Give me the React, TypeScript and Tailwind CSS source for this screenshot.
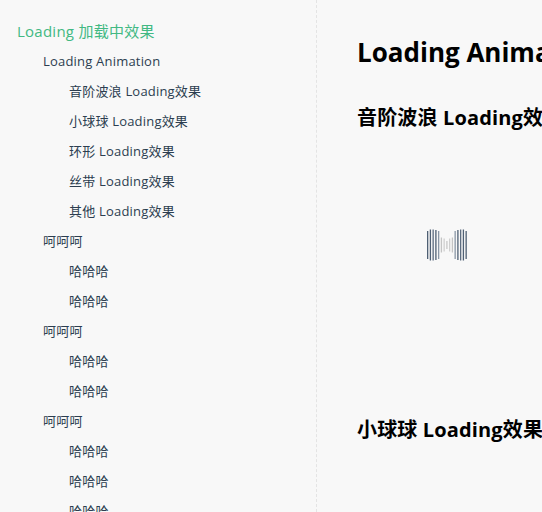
import React from "react";

const font = { fontFamily: '"Open Sans", "Noto Sans CJK SC", sans-serif' };

type Item = { text: string; level: 0 | 1 | 2; active?: boolean };

const items: Item[] = [
  { text: "Loading 加载中效果", level: 0, active: true },
  { text: "Loading Animation", level: 1 },
  { text: "音阶波浪 Loading效果", level: 2 },
  { text: "小球球 Loading效果", level: 2 },
  { text: "环形 Loading效果", level: 2 },
  { text: "丝带 Loading效果", level: 2 },
  { text: "其他 Loading效果", level: 2 },
  { text: "呵呵呵", level: 1 },
  { text: "哈哈哈", level: 2 },
  { text: "哈哈哈", level: 2 },
  { text: "呵呵呵", level: 1 },
  { text: "哈哈哈", level: 2 },
  { text: "哈哈哈", level: 2 },
  { text: "呵呵呵", level: 1 },
  { text: "哈哈哈", level: 2 },
  { text: "哈哈哈", level: 2 },
  { text: "哈哈哈", level: 2 },
];

const bars = [
  { h: 28, c: "#4f6074" },
  { h: 31, c: "#4f6074" },
  { h: 31, c: "#5d6d80" },
  { h: 30, c: "#4f6074" },
  { h: 28, c: "#8a97a6" },
  { h: 15, c: "#c4c4c4" },
  { h: 13, c: "#cfcfcf" },
  { h: 8, c: "#c8c8c8" },
  { h: 13, c: "#cfcfcf" },
  { h: 15, c: "#c4c4c4" },
  { h: 28, c: "#8a97a6" },
  { h: 30, c: "#4f6074" },
  { h: 31, c: "#5d6d80" },
  { h: 31, c: "#4f6074" },
  { h: 28, c: "#4f6074" },
];

function Wave() {
  const pitch = 2.75;
  return (
    <svg width="44" height="34" viewBox="0 0 44 34">
      {bars.map((b, i) => (
        <rect
          key={i}
          x={1 + i * pitch}
          y={17 - b.h / 2}
          width={1.3}
          height={b.h}
          fill={b.c}
        />
      ))}
    </svg>
  );
}

export default function App() {
  return (
    <div className="flex h-[512px] w-[542px] overflow-hidden bg-[#f8f8f8]" style={font}>
      <aside className="w-[317px] shrink-0 border-r border-dashed border-[#e4e4e4] pt-[17px]">
        {items.map((it, i) => {
          if (it.level === 0)
            return (
              <div key={i} className="h-[29px] pl-[17px] text-[15px] leading-[29px] tracking-[0.25px] text-[#42b983]">
                {it.text}
              </div>
            );
          return (
            <div
              key={i}
              className={
                "h-[30px] whitespace-nowrap text-[13px] leading-[30px] tracking-[0.2px] text-[#2c3e50] " +
                (it.level === 1 ? "pl-[43px]" : "pl-[69px]")
              }
            >
              {it.text}
            </div>
          );
        })}
      </aside>
      <main className="min-w-0 flex-1 whitespace-nowrap pl-[40px] pt-[34px] text-black">
        <h1 className="text-[26px] font-bold leading-[36px]">Loading Animation</h1>
        <h2 className="mt-[34px] text-[20px] font-bold leading-[28px] tracking-[0.15px]">音阶波浪 Loading效果</h2>
        <div className="flex h-[226px] items-center pl-[69px]">
          <Wave />
        </div>
        <h2 className="mt-[58px] text-[20px] font-bold leading-[28px] tracking-[0.15px]">小球球 Loading效果</h2>
      </main>
    </div>
  );
}
